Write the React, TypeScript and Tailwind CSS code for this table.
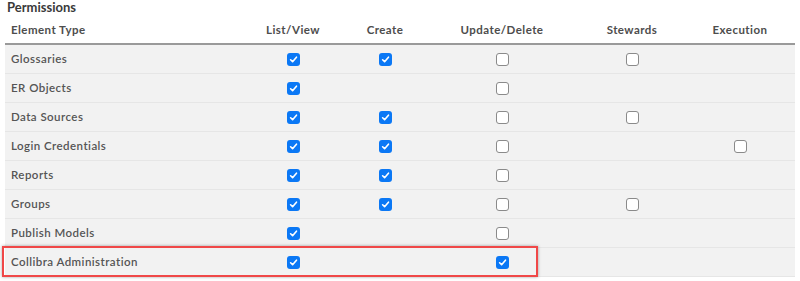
const cols = ['List/View', 'Create', 'Update/Delete', 'Stewards', 'Execution'];

// null = no checkbox, true = checked, false = unchecked
const rows: { name: string; cells: (boolean | null)[] }[] = [
  { name: 'Glossaries', cells: [true, true, false, false, null] },
  { name: 'ER Objects', cells: [true, null, false, null, null] },
  { name: 'Data Sources', cells: [true, true, false, false, null] },
  { name: 'Login Credentials', cells: [true, true, false, null, false] },
  { name: 'Reports', cells: [true, true, false, null, null] },
  { name: 'Groups', cells: [true, true, false, false, null] },
  { name: 'Publish Models', cells: [true, null, false, null, null] },
  { name: 'Collibra Administration', cells: [true, null, true, null, null] },
];

function Box({ checked }: { checked: boolean }) {
  if (checked) {
    return (
      <span className="flex h-[13px] w-[13px] items-center justify-center rounded-[3px] bg-[#0b78f5]">
        <svg width="9" height="9" viewBox="0 0 10 10" fill="none">
          <path d="M1.8 5.3 L4 7.4 L8.3 2.4" stroke="white" strokeWidth="1.8" strokeLinecap="round" strokeLinejoin="round" />
        </svg>
      </span>
    );
  }
  return <span className="block h-[13px] w-[13px] rounded-[3px] border border-[#8a8a8a] bg-white" />;
}

const grid = 'grid grid-cols-[236px_104px_80px_154px_106px_110px]';

export default function App() {
  return (
    <div className="relative h-[281px] w-[800px] bg-white font-['Lato','Open_Sans',sans-serif] text-[#555]">
      <div className="px-[7px] text-[13px] font-bold leading-[15px] text-[#3a3a3a]">Permissions</div>

      <div className="mx-[5px] pt-px">
        <div className={`${grid} h-[29px] items-center border-b-2 border-[#9a9a9a] text-[11.5px] font-bold tracking-[0.45px] text-[#4d4d4d]`}>
          <div className="pl-[6px]">Element Type</div>
          {cols.map((c) => (
            <div key={c} className="text-center">{c}</div>
          ))}
        </div>

        {rows.map((r) => (
          <div key={r.name} className={`${grid} h-[29px] items-center border-b border-[#e6e6e6] bg-[#f2f2f2] text-[11.5px] font-semibold tracking-[0.45px]`}>
            <div className="pl-[6px]">{r.name}</div>
            {r.cells.map((v, i) => (
              <div key={i} className="flex justify-center">
                {v !== null && <Box checked={v} />}
              </div>
            ))}
          </div>
        ))}
      </div>

      {/* highlight annotation */}
      <div className="pointer-events-none absolute left-[2px] top-[246px] h-[31px] w-[536px] border-[2.5px] border-[#f04848] shadow-[0_0_3px_rgba(0,0,0,0.35)]" />
    </div>
  );
}
